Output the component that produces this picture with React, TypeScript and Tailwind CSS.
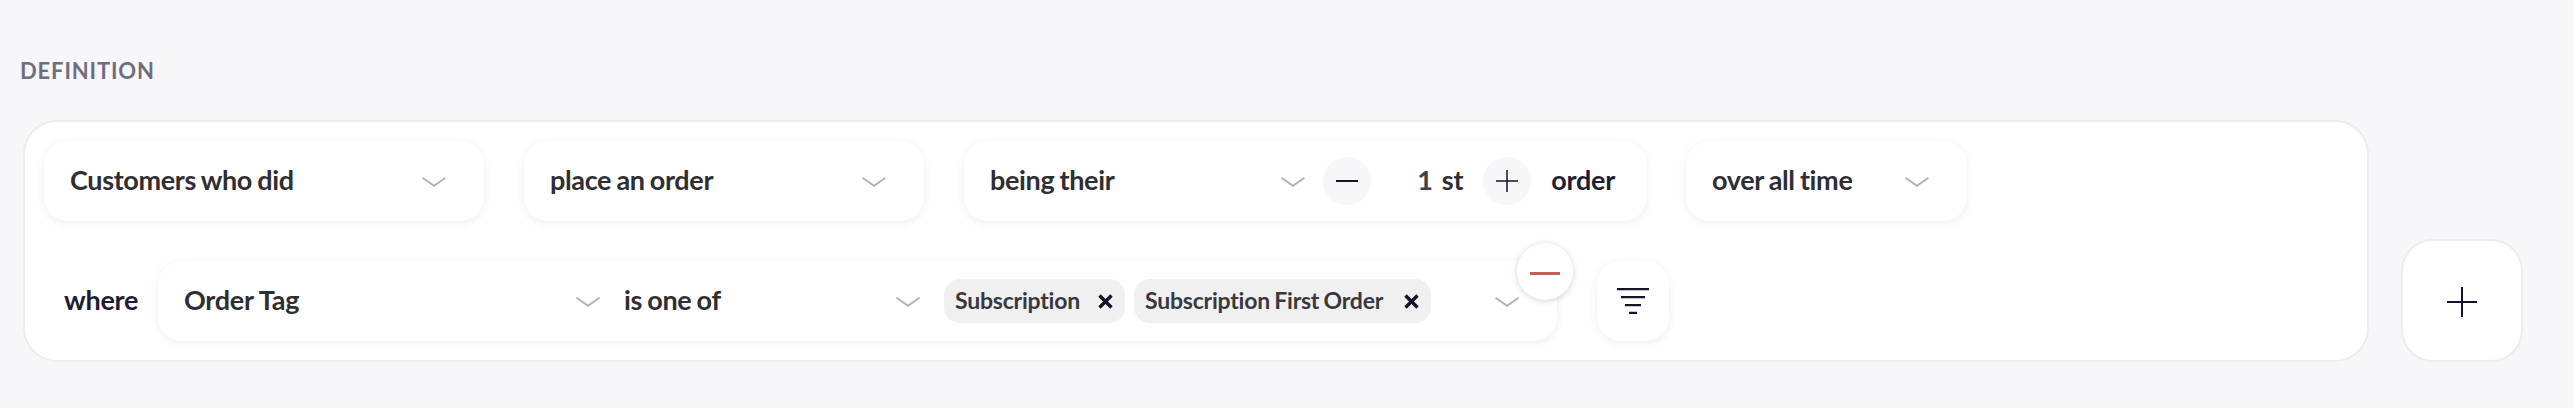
import React from "react";

const Chevron = () => (
  <svg width="24" height="10" viewBox="0 0 24 10" fill="none" className="mt-[2px] shrink-0">
    <path d="M0.5 0.8 L12 8.8 L23.5 0.8" stroke="#b0aec0" strokeWidth="1.8" />
  </svg>
);

const Dropdown = ({ label, className }: { label: string; className: string }) => (
  <div className={`flex h-[80px] items-center justify-between rounded-[24px] bg-white pl-[26px] pr-[38px] shadow-[0_2px_10px_rgba(30,30,60,0.07)] ${className}`}>
    <span className="mb-[2px] text-[27px] font-bold tracking-[-0.35px] text-[#2e2e33] [word-spacing:-1px]">{label}</span>
    <Chevron />
  </div>
);

const XIcon = () => (
  <svg width="15" height="15" viewBox="0 0 15 15" fill="none" className="shrink-0">
    <path d="M1.5 1.5 L13.5 13.5 M13.5 1.5 L1.5 13.5" stroke="#14132b" strokeWidth="3.4" />
  </svg>
);

const Chip = ({ label, className }: { label: string; className: string }) => (
  <div className={`flex h-[44px] items-center justify-between rounded-[16px] bg-[#f0f0f1] pl-[11px] pr-[12px] ${className}`}>
    <span className="mb-[1px] text-[23px] font-bold tracking-[-0.22px] text-[#38383d] [word-spacing:-1px]">{label}</span>
    <XIcon />
  </div>
);

const Round = ({ children }: { children: React.ReactNode }) => (
  <div className="flex h-[48px] w-[48px] shrink-0 items-center justify-center rounded-full bg-[#f7f7f9]">{children}</div>
);

const PlusIcon = ({ size, stroke }: { size: number; stroke: number }) => (
  <svg width={size} height={size} viewBox={`0 0 ${size} ${size}`} fill="none">
    <path d={`M${size / 2} 0 V${size} M0 ${size / 2} H${size}`} stroke="#14132b" strokeWidth={stroke} />
  </svg>
);

const FilterIcon = () => (
  <svg width="32" height="26" viewBox="0 0 32 26" fill="none">
    <path d="M0 1.2 H32 M4 9.2 H28 M8 17.2 H24 M12 25 H20" stroke="#14132b" strokeWidth="2.3" />
  </svg>
);

export default function App() {
  return (
    <div className="h-[408px] w-[2574px] bg-[#f7f7f9] pl-[20px] pt-[56px] font-['Lato','Liberation_Sans',sans-serif]">
      <div className="text-[22px] font-bold leading-[30px] tracking-[0.85px] text-[#6f6e80]">DEFINITION</div>
      <div className="mt-[34px] flex items-end gap-[32px] pl-[3px]">
        <div className="flex h-[242px] w-[2346px] flex-col gap-[40px] rounded-[34px] border-2 border-[#ececef] bg-white pl-[19px] pt-[19px]">
          <div className="flex gap-[40px]">
            <Dropdown label="Customers who did" className="w-[440px]" />
            <Dropdown label="place an order" className="w-[400px]" />
            <div className="flex h-[80px] w-[683px] items-center rounded-[24px] bg-white pl-[26px] shadow-[0_2px_10px_rgba(30,30,60,0.07)]">
              <span className="mb-[2px] text-[27px] font-bold tracking-[-0.35px] text-[#2e2e33] [word-spacing:-1px]">being their</span>
              <div className="ml-auto"><Chevron /></div>
              <div className="ml-[18px]">
                <Round><div className="h-[1.5px] w-[22px] bg-[#14132b]" /></Round>
              </div>
              <span className="mb-[2px] ml-[46px] text-[27px] font-bold text-[#3f3f44]">1</span>
              <span className="mb-[2px] ml-[9px] text-[27px] font-bold tracking-[-0.25px] text-[#2e2e33]">st</span>
              <div className="ml-[20px]">
                <Round><PlusIcon size={22} stroke={1.5} /></Round>
              </div>
              <span className="mb-[2px] ml-[20px] mr-[32px] text-[27px] font-bold tracking-[-0.25px] text-[#1e1d33]">order</span>
            </div>
            <Dropdown label="over all time" className="-ml-[1px] w-[281px]" />
          </div>
          <div className="flex items-center">
            <span className="mb-[2px] ml-[20px] w-[94px] text-[27px] font-bold tracking-[-0.25px] text-[#1e1d33]">where</span>
            <div className="relative flex h-[80px] w-[1399px] items-center rounded-[24px] bg-white pl-[26px] pr-[38px] shadow-[0_2px_10px_rgba(30,30,60,0.07)]">
              <span className="mb-[2px] w-[392px] text-[27px] font-bold tracking-[-0.25px] text-[#2e2e33]">Order Tag</span>
              <Chevron />
              <span className="mb-[2px] ml-[24px] w-[272px] text-[27px] font-bold tracking-[-0.35px] text-[#2e2e33] [word-spacing:-1px]">is one of</span>
              <Chevron />
              <Chip label="Subscription" className="ml-[24px] w-[181px]" />
              <Chip label="Subscription First Order" className="ml-[9px] w-[297px]" />
              <div className="ml-auto"><Chevron /></div>
              <div className="absolute right-[-16px] top-[-18px] flex h-[57px] w-[56px] items-center justify-center rounded-full bg-white pt-[3px] shadow-[0_1px_6px_rgba(30,30,60,0.2)]">
                <div className="h-[3px] w-[30px] bg-[#d05a50]" />
              </div>
            </div>
            <div className="ml-[40px] flex h-[80px] w-[72px] items-center justify-center rounded-[24px] bg-white shadow-[0_2px_10px_rgba(30,30,60,0.07)]">
              <FilterIcon />
            </div>
          </div>
        </div>
        <div className="flex h-[123px] w-[122px] items-center justify-center rounded-[32px] border-2 border-[#ececef] bg-white pt-[2px]">
          <PlusIcon size={30} stroke={2} />
        </div>
      </div>
    </div>
  );
}
